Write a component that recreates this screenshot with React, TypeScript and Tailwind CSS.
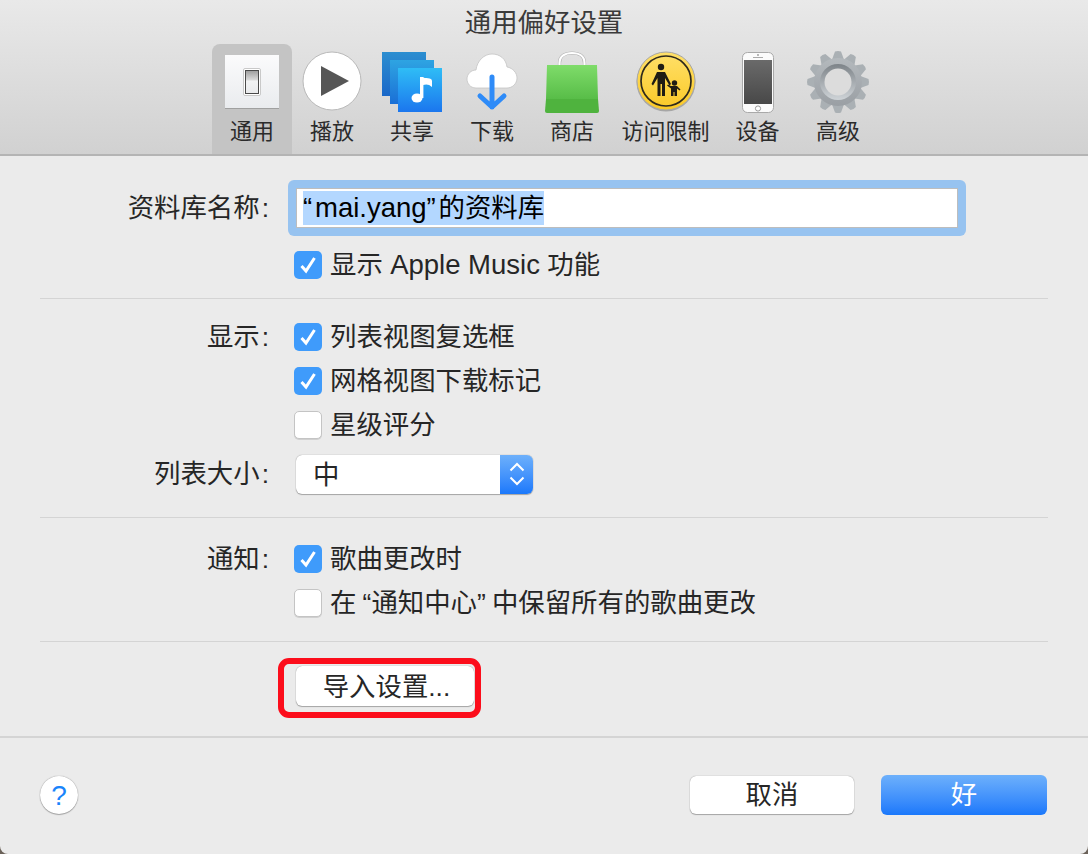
const font = "font-['Liberation_Sans','Noto_Sans_CJK_SC',sans-serif]";

function SwitchIcon() {
  return (
    <svg width="56" height="56" viewBox="0 -1 56 56">
      <defs>
        <linearGradient id="sw" x1="0" y1="0" x2="0" y2="1">
          <stop offset="0" stopColor="#fbfbfc" />
          <stop offset="1" stopColor="#e9ebee" />
        </linearGradient>
        <linearGradient id="tg" x1="0" y1="0" x2="0" y2="1">
          <stop offset="0" stopColor="#9c9c9c" />
          <stop offset="0.42" stopColor="#dcdcdc" />
          <stop offset="0.45" stopColor="#f2f3f4" />
          <stop offset="1" stopColor="#e9eaec" />
        </linearGradient>
      </defs>
      <rect x="1" y="1" width="54" height="54" fill="url(#sw)" />
      <rect x="1" y="54" width="54" height="1" fill="#a0a0a0" />
      <rect x="19.5" y="14.5" width="17" height="27" rx="1.5" fill="#fff" stroke="#c9c9c9" />
      <rect x="21.5" y="16.5" width="13" height="23" fill="url(#tg)" stroke="#4a4a4a" />
    </svg>
  );
}

function PlayIcon() {
  return (
    <svg width="60" height="60" viewBox="0 0 60 60">
      <circle cx="30" cy="30" r="29" fill="#fff" stroke="#b9b9b9" />
      <path d="M19 15 L47 30 L19 45 Z" fill="#565656" />
    </svg>
  );
}

function ShareIcon() {
  return (
    <svg width="62" height="62" viewBox="0 -1 62 62">
      <defs>
        <linearGradient id="s1" x1="0" y1="0" x2="0" y2="1">
          <stop offset="0" stopColor="#2c8ed0" />
          <stop offset="1" stopColor="#1a67c8" />
        </linearGradient>
        <linearGradient id="s2" x1="0" y1="0" x2="0" y2="1">
          <stop offset="0" stopColor="#2ea4e2" />
          <stop offset="1" stopColor="#1a6fd6" />
        </linearGradient>
        <linearGradient id="s3" x1="0" y1="0" x2="0" y2="1">
          <stop offset="0" stopColor="#2fbdf6" />
          <stop offset="1" stopColor="#1b76ee" />
        </linearGradient>
      </defs>
      <rect x="1" y="1" width="44" height="44" fill="url(#s1)" />
      <rect x="9" y="9" width="44" height="44" fill="url(#s2)" />
      <rect x="17" y="17" width="44" height="44" fill="url(#s3)" />
      <ellipse cx="36" cy="47" rx="5.5" ry="4.6" fill="#fff" />
      <rect x="39" y="26" width="3.4" height="21" fill="#fff" />
      <path d="M41 26 C44 28 51 26 51 30 L51 36 C48 33 45 33 42 34 Z" fill="#fff" />
    </svg>
  );
}

function DownloadIcon() {
  return (
    <svg width="54" height="60" viewBox="0 0 54 60">
      <path
        d="M11 37 C5 37 2 32 2 28 C2 23 6 19 11 19 C12 10 19 3 27 3 C35 3 41 8 42 16 C48 17 52 22 52 27 C52 33 47 37 42 37 Z"
        fill="#fff"
        stroke="#c4c4c4"
        strokeWidth="0.8"
      />
      <path d="M27 26 L27 56 M15 45 L27 56 L39 45" fill="none" stroke="#2e8bf8" strokeWidth="5" strokeLinecap="round" strokeLinejoin="round" />
    </svg>
  );
}

function BagIcon() {
  return (
    <svg width="56" height="64" viewBox="0 0 56 64">
      <defs>
        <linearGradient id="bag" x1="0" y1="0" x2="0" y2="1">
          <stop offset="0" stopColor="#7fdc6a" />
          <stop offset="1" stopColor="#58bd48" />
        </linearGradient>
      </defs>
      <path d="M15.5 17 L15.5 14 C15.5 7 21 4 28 4 C35 4 40.5 7 40.5 14 L40.5 17" fill="none" stroke="#b0b0b0" strokeWidth="3.2" />
      <path d="M15.5 17 L15.5 14 C15.5 7 21 4 28 4 C35 4 40.5 7 40.5 14 L40.5 17" fill="none" stroke="#fff" strokeWidth="2.2" />
      <path d="M3 16 L53 16 L54 50 L2 50 Z" fill="url(#bag)" />
      <path d="M2 50 L54 50 L55 62 Q55 64 53 64 L3 64 Q1 64 1 62 Z" fill="#4fb33e" />
    </svg>
  );
}

function RestrictIcon() {
  return (
    <svg width="60" height="62" viewBox="0 0 60 62">
      <defs>
        <linearGradient id="ye" x1="0" y1="0" x2="0" y2="1">
          <stop offset="0" stopColor="#ffe06a" />
          <stop offset="1" stopColor="#fbc926" />
        </linearGradient>
      </defs>
      <circle cx="30" cy="32" r="29.5" fill="#6b6b6b" opacity="0.45" />
      <circle cx="30" cy="31" r="29" fill="url(#ye)" stroke="#a8a8a8" />
      <circle cx="30" cy="31" r="25" fill="none" stroke="#2f2a1c" strokeWidth="1.7" />
      <g transform="translate(0 1)">
        <circle cx="25" cy="16" r="3.2" fill="#1f1c14" />
        <path d="M21 21 H29 L35 33 L33.5 34.5 L29 27 V45 H26 V33 H24.5 V45 H21.5 V27 L17 34.5 L15.5 33 Z" fill="#1f1c14" />
        <circle cx="38.5" cy="32" r="2.7" fill="#1f1c14" />
        <path d="M32 33.5 L35 35 H41 L44.5 38.5 L43.5 39.5 L41 37.5 V45 H38.5 V41 H37.5 V45 H35 V37.5 L31 34.5 Z" fill="#1f1c14" />
      </g>
    </svg>
  );
}

function PhoneIcon() {
  return (
    <svg width="36" height="64" viewBox="0 0 36 64">
      <defs>
        <linearGradient id="scr" x1="0" y1="0" x2="0" y2="1">
          <stop offset="0" stopColor="#6a6a6a" />
          <stop offset="1" stopColor="#484848" />
        </linearGradient>
      </defs>
      <rect x="2.5" y="3.5" width="31" height="60" rx="5" fill="#fbfbfb" stroke="#a9a9a9" />
      <rect x="4" y="11" width="28" height="44" fill="url(#scr)" />
      <circle cx="18" cy="6" r="0.9" fill="#999" />
      <rect x="13" y="8" width="10" height="1" fill="#aaa" />
      <circle cx="18" cy="59.5" r="2.6" fill="#fff" stroke="#999" />
    </svg>
  );
}

function GearIcon() {
  const teeth = Array.from({ length: 12 }, (_, i) => i * 30);
  return (
    <svg width="64" height="64" viewBox="0 -1 64 64">
      <defs>
        <linearGradient id="gr" x1="0" y1="0" x2="0" y2="1">
          <stop offset="0" stopColor="#b4b9bd" />
          <stop offset="1" stopColor="#9a9fa4" />
        </linearGradient>
        <linearGradient id="gi" x1="0" y1="0" x2="0" y2="1">
          <stop offset="0" stopColor="#7d8388" />
          <stop offset="1" stopColor="#cfd4d8" />
        </linearGradient>
      </defs>
      {teeth.map((a) => (
        <path key={a} d="M29 1.5 Q32 0.5 35 1.5 L38.5 11 H25.5 Z" fill="#aab0b4" transform={`rotate(${a} 32 32)`} />
      ))}
      <circle cx="32" cy="32" r="24" fill="url(#gr)" />
      <circle cx="32" cy="32" r="18" fill="url(#gi)" />
      <circle cx="32" cy="32" r="13.5" fill="#dcdcdc" />
    </svg>
  );
}

function Check({ on }: { on: boolean }) {
  if (!on) {
    return <span className="w-[28px] h-[28px] rounded-[5px] bg-white border border-[#c4c4c4] shadow-[0_1px_0_#d0d0d0] shrink-0" />;
  }
  return (
    <span className="w-[28px] h-[28px] rounded-[5px] bg-[#3f9bfb] flex items-center justify-center shrink-0">
      <svg width="20" height="20" viewBox="0 0 20 20">
        <path d="M3.5 11 L8 16 L16.5 3" fill="none" stroke="#fff" strokeWidth="3" />
      </svg>
    </span>
  );
}

function Row({ label, children, h = "h-[44px]" }: { label?: string; children: React.ReactNode; h?: string }) {
  return (
    <div className={`flex items-center ${h}`}>
      <div className="w-[294px] pr-[25px] text-right shrink-0 whitespace-nowrap">
        {label}
        {label && <span className="ml-[2px]">:</span>}
      </div>
      {children}
    </div>
  );
}

function CheckRow({ label, text, on }: { label?: string; text: React.ReactNode; on: boolean }) {
  return (
    <Row label={label}>
      <Check on={on} />
      <span className="ml-[8px] whitespace-nowrap">{text}</span>
    </Row>
  );
}

function Sep() {
  return <div className="mx-[40px] h-px bg-[#d4d4d4]" />;
}

const tabs = [
  { label: "通用", w: "w-[80px]", icon: <SwitchIcon />, active: true },
  { label: "播放", w: "w-[80px]", icon: <PlayIcon /> },
  { label: "共享", w: "w-[80px]", icon: <ShareIcon /> },
  { label: "下载", w: "w-[80px]", icon: <DownloadIcon /> },
  { label: "商店", w: "w-[80px]", icon: <BagIcon /> },
  { label: "访问限制", w: "w-[107px]", icon: <RestrictIcon /> },
  { label: "设备", w: "w-[77px]", icon: <PhoneIcon /> },
  { label: "高级", w: "w-[84px]", icon: <GearIcon /> },
];

export default function App() {
  return (
    <div className={`w-[1088px] h-[854px] overflow-hidden bg-[#6b6259] ${font}`}>
      <div className="w-full h-full bg-[#ebebeb] rounded-b-[8px] text-[26.4px] leading-[32px] text-[#262626] flex flex-col">
        <div className="h-[156px] shrink-0 bg-gradient-to-b from-[#e9e9e9] to-[#d1d1d1] border-b-2 border-[#b4b4b4] flex flex-col">
          <div className="h-[44px] shrink-0 text-center text-[26.4px] leading-[47px] text-[#3a3a3a]">通用偏好设置</div>
          <div className="flex-1 flex pl-[212px]">
            {tabs.map((t) => (
              <div key={t.label} className={`${t.w} shrink-0 flex flex-col items-center rounded-t-[8px] ${t.active ? "bg-[#c4c4c4]" : ""}`}>
                <div className="h-[74px] flex items-center justify-center">{t.icon}</div>
                <div className="text-[22px] leading-[28px] text-[#2b2b2b] whitespace-nowrap">{t.label}</div>
              </div>
            ))}
          </div>
        </div>

        <div className="mt-[24px]">
          <Row label="资料库名称" h="h-[56px]">
            <div className="-ml-[6px] w-[678px] h-[56px] rounded-[6px] bg-[#97c3f0] p-[8px]">
              <div className="h-full bg-white border border-[#bdbdbd] flex items-center pl-[6px]">
                <span className="bg-[#b3d7ff] text-black leading-[33px] whitespace-nowrap">
                  <span className="text-[27.5px]">
                    <span className="inline-block w-[12px]">“</span>mai.yang<span className="inline-block w-[12px]">”</span>
                  </span>
                  的资料库
                </span>
              </div>
            </div>
          </Row>
        </div>
        <div className="mt-[7px] mb-[11px]">
          <CheckRow text={<>显示 <span className="text-[27.5px]">Apple Music</span> 功能</>} on />
        </div>
        <Sep />

        <div className="mt-[16px]">
          <CheckRow label="显示" text="列表视图复选框" on />
          <CheckRow text="网格视图下载标记" on />
          <CheckRow text="星级评分" on={false} />
        </div>
        <div className="mt-[8px] mb-[24px]">
          <Row label="列表大小" h="h-[38px]">
            <div className="ml-[2px] w-[237px] h-[39px] flex rounded-[6px] bg-white shadow-[0_0_1px_#777,0_1px_1px_#aaa] overflow-hidden">
              <div className="flex-1 pl-[17px] leading-[41px]">中</div>
              <div className="w-[33px] bg-gradient-to-b from-[#6db0fb] to-[#1a78fb] flex items-center justify-center">
                <svg width="16" height="28" viewBox="0 0 16 28">
                  <path d="M1.5 10.5 L8 4 L14.5 10.5 M1.5 17.5 L8 24 L14.5 17.5" fill="none" stroke="#fff" strokeWidth="2" />
                </svg>
              </div>
            </div>
          </Row>
        </div>
        <Sep />

        <div className="mt-[19px] mb-[16px]">
          <CheckRow label="通知" text="歌曲更改时" on />
          <CheckRow
            text={
              <>
                在<span className="inline-block w-[15px] text-right">“</span>通知中心<span className="inline-block w-[15px] text-left">”</span>中保留所有的歌曲更改
              </>
            }
            on={false}
          />
        </div>
        <Sep />

        <div className="mt-[24px] mb-[30px] ml-[296px] relative w-[178px] h-[40px]">
          <div className="h-full rounded-[6px] bg-white shadow-[0_0_1px_#777,0_1px_1px_#aaa] text-center leading-[42px] whitespace-nowrap pl-[3px]">导入设置...</div>
          <div className="absolute -left-[18px] -top-[8px] w-[203px] h-[60px] rounded-[11px] border-[6px] border-[#fc0d1b]" />
        </div>
        <div className="h-[2px] bg-[#d4d4d4]" />

        <div className="flex-1 flex items-start pt-[37px] pl-[40px] pr-[41px]">
          <div className="w-[38px] h-[38px] rounded-full bg-white shadow-[0_0_1px_#777,0_1px_1px_#aaa] text-center text-[28px] text-[#1a84fb] leading-[39px] mt-[1px]">?</div>
          <div className="ml-auto w-[164px] h-[38px] mt-[1px] rounded-[6px] bg-white shadow-[0_0_1px_#777,0_1px_1px_#aaa] text-center leading-[38px]">取消</div>
          <div className="ml-[27px] w-[166px] h-[40px] rounded-[6px] bg-gradient-to-b from-[#6db0fb] to-[#1a78fb] text-white text-center leading-[40px]">好</div>
        </div>
      </div>
    </div>
  );
}
